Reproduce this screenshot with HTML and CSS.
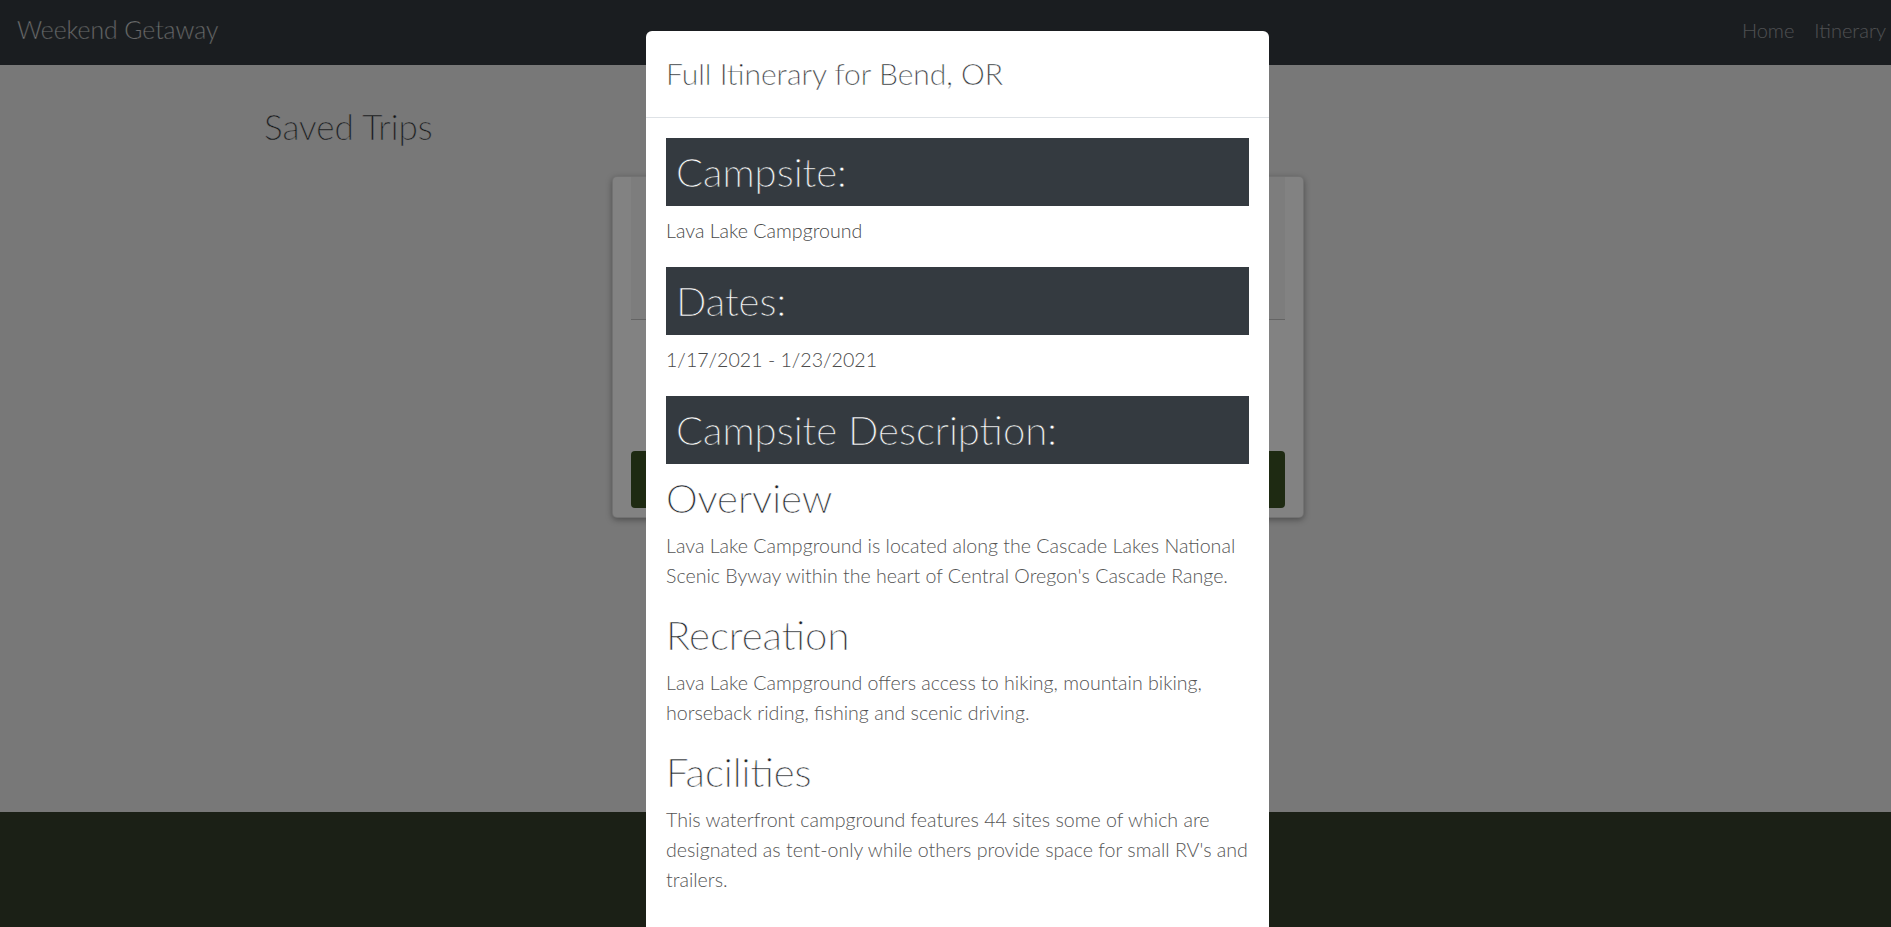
FILE: index.html
```html
<!DOCTYPE html>
<html lang="en">
<head>
<meta charset="utf-8">
<title>Weekend Getaway</title>
<link rel="stylesheet" href="styles.css">
</head>
<body>
<div class="page">
  <nav class="navbar">
    <a class="brand" href="#">Weekend Getaway</a>
    <ul class="nav">
      <li><a class="nav-link" href="#">Home</a></li>
      <li><a class="nav-link" href="#">Itinerary</a></li>
    </ul>
  </nav>
  <main class="main">
    <h2 class="page-title">Saved Trips</h2>
    <div class="trip-card">
      <div class="trip-header"></div>
      <div class="trip-body"></div>
      <button class="trip-btn" type="button">View Full Itinerary</button>
    </div>
  </main>
  <footer class="footer"></footer>
</div>

<div class="backdrop"></div>

<div class="modal">
  <div class="modal-dialog">
    <div class="modal-header">
      <h5 class="modal-title">Full Itinerary for Bend, OR</h5>
    </div>
    <div class="modal-body">
      <h1 class="section-bar">Campsite:</h1>
      <p class="value">Lava Lake Campground</p>
      <h1 class="section-bar">Dates:</h1>
      <p class="value">1/17/2021 - 1/23/2021</p>
      <h1 class="section-bar">Campsite Description:</h1>
      <h2 class="desc-title">Overview</h2>
      <p class="desc-text">Lava Lake Campground is located along the Cascade Lakes National Scenic Byway within the heart of Central Oregon's Cascade Range.</p>
      <h2 class="desc-title">Recreation</h2>
      <p class="desc-text">Lava Lake Campground offers access to hiking, mountain biking, horseback riding, fishing and scenic driving.</p>
      <h2 class="desc-title">Facilities</h2>
      <p class="desc-text">This waterfront campground features 44 sites some of which are designated as tent-only while others provide space for small RV's and trailers.</p>
    </div>
  </div>
</div>
</body>
</html>
```

FILE: styles.css
```css
html, body {
  margin: 0;
  padding: 0;
  overflow: hidden;
}

body {
  font-family: "Lato Light", "Lato", "Open Sans", sans-serif;
  font-weight: 300;
  color: #212529;
  background: #ffffff;
}

.page {
  width: 1915px;
}

/* Navbar */
.navbar {
  height: 65px;
  box-sizing: border-box;
  background: #343a40;
  display: flex;
  align-items: center;
  justify-content: space-between;
  padding: 0 19px 5px 17px;
}

.brand {
  color: #ffffff;
  font-size: 24.7px;
  text-decoration: none;
  line-height: 1.5;
  -webkit-text-stroke: 0.35px #343a40;
}

.nav {
  list-style: none;
  margin: 0;
  padding: 0;
  display: flex;
}

.nav-link {
  display: block;
  padding: 0 10px;
  font-size: 20px;
  color: rgba(255, 255, 255, 0.5);
  text-decoration: none;
  line-height: 1.5;
}

/* Main */
.main {
  height: 747px;
  box-sizing: border-box;
  background: #ebebeb;
  padding: 40px 0 0 264px;
}

.page-title {
  margin: 0 0 29px;
  font-size: 35px;
  font-weight: 300;
  line-height: 1.2;
  -webkit-text-stroke: 0.45px #ebebeb;
}

.trip-card {
  margin-left: 348px;
  width: 692px;
  box-sizing: border-box;
  background: #ffffff;
  border: 1px solid rgba(0, 0, 0, 0.125);
  border-radius: 5px;
  padding: 0 18px 9px;
  box-shadow: 0 2px 6px rgba(0, 0, 0, 0.35);
}

.trip-header {
  height: 142px;
  background: rgba(0, 0, 0, 0.04);
  border-bottom: 1px solid rgba(0, 0, 0, 0.2);
}

.trip-body {
  height: 131px;
}

.trip-btn {
  display: block;
  width: 100%;
  height: 57px;
  border: none;
  border-radius: 4px;
  background: #3c5424;
  color: #ffffff;
  font-family: inherit;
  font-size: 20px;
}

.footer {
  height: 200px;
  background: #36402c;
}

/* Modal */
.backdrop {
  position: fixed;
  inset: 0;
  background: rgba(0, 0, 0, 0.49);
}

.modal {
  position: fixed;
  top: 0;
  left: 0;
  width: 1915px;
  height: 100vh;
  overflow: hidden;
}

.modal-dialog {
  width: 623px;
  margin: 31px auto 0;
  background: #ffffff;
  border-radius: 6px;
}

.modal-header {
  padding: 20px 20px 21px;
  border-bottom: 1px solid #dee2e6;
}

.modal-title {
  margin: 0;
  font-size: 30px;
  font-weight: 300;
  line-height: 1.5;
  color: #212529;
  -webkit-text-stroke: 0.35px #ffffff;
}

.modal-body {
  padding: 20px;
}

.section-bar {
  margin: 0 0 10px;
  padding: 10px 10px;
  background: #343a40;
  color: #ffffff;
  font-size: 40px;
  font-weight: 300;
  line-height: 1.2;
  -webkit-text-stroke: 0.5px #343a40;
}

.value,
.desc-text {
  margin: 0 0 20px;
  font-size: 19.6px;
  line-height: 30px;
  color: #555555;
}

.value {
  margin-bottom: 21px;
  color: #4a4a4a;
}

.desc-title {
  margin: 0 0 9px;
  font-size: 40px;
  font-weight: 300;
  line-height: 1.2;
  color: #212529;
  -webkit-text-stroke: 0.5px #ffffff;
}
```
